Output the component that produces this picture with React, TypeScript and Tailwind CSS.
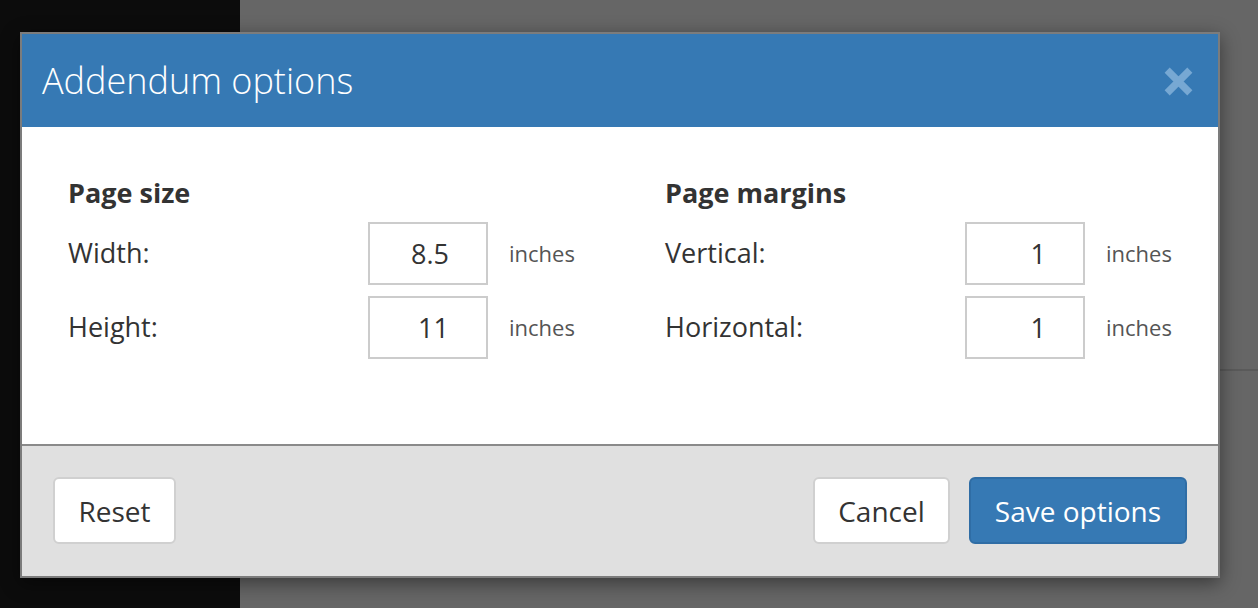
import React from 'react';

const font = { fontFamily: '"Open Sans", "Liberation Sans", sans-serif' };

type FieldProps = { label: string; value: string };

const Field: React.FC<FieldProps> = ({ label, value }) => (
  <div className="flex items-center h-[63px]">
    <span className="w-[300px] text-[27px] text-[#333]">{label}</span>
    <input
      readOnly
      value={value}
      className="w-[120px] h-[63px] border-2 border-[#cccccc] bg-white text-right pr-[37px] text-[27px] text-[#333] outline-none"
    />
    <span className="ml-[21px] text-[22px] text-[#555]">inches</span>
  </div>
);

export default function App() {
  return (
    <div className="relative w-[1258px] h-[608px] overflow-hidden bg-[#666666]" style={font}>
      {/* page behind the overlay */}
      <div className="absolute left-0 top-0 w-[240px] h-full bg-[#0c0c0c]" />
      <div className="absolute left-[240px] right-0 top-[369px] h-[2px] bg-[#5a5a5a]" />

      {/* Modal */}
      <div className="absolute left-[20px] top-[32px] w-[1200px] border-2 border-[#7c7c7c] bg-white shadow-[0_5px_18px_rgba(0,0,0,0.45)]">
        {/* Header */}
        <div className="flex items-center justify-between h-[93px] bg-[#3679b4] pl-[20px] pr-[23px]">
          <h1 className="text-[36px] font-light text-white leading-[44px]">Addendum options</h1>
          <svg width="33" height="33" viewBox="0 0 32 32" className="mt-[1px]">
            <path
              d="M5 5 L27 27 M27 5 L5 27"
              stroke="#77a8d3"
              strokeWidth="7"
              strokeLinecap="butt"
            />
          </svg>
        </div>

        {/* Body */}
        <div className="h-[317px] grid grid-cols-2 pl-[46px] pt-[49px]">
          <div>
            <h2 className="text-[27px] font-bold text-[#333] leading-[33px]">Page size</h2>
            <div className="mt-[13px] flex flex-col gap-[11px]">
              <Field label="Width:" value="8.5" />
              <Field label="Height:" value="11" />
            </div>
          </div>
          <div className="pl-[22px]">
            <h2 className="text-[27px] font-bold text-[#333] leading-[33px]">Page margins</h2>
            <div className="mt-[13px] flex flex-col gap-[11px]">
              <Field label="Vertical:" value="1" />
              <Field label="Horizontal:" value="1" />
            </div>
          </div>
        </div>

        {/* Footer */}
        <div className="flex items-center justify-between h-[132px] bg-[#e0e0e0] border-t-2 border-[#8a8a8a] pl-[31px] pr-[31px] pb-[1px]">
          <button className="w-[123px] h-[67px] rounded-[6px] border-2 border-[#d0d0d0] bg-white text-[28px] text-[#333]">
            Reset
          </button>
          <div className="flex items-center gap-[19px]">
            <button className="w-[137px] h-[67px] rounded-[6px] border-2 border-[#d0d0d0] bg-white text-[28px] text-[#333]">
              Cancel
            </button>
            <button className="w-[218px] h-[67px] rounded-[6px] border-2 border-[#2f6da5] bg-[#3679b4] text-[28px] text-white">
              Save options
            </button>
          </div>
        </div>
      </div>
    </div>
  );
}
